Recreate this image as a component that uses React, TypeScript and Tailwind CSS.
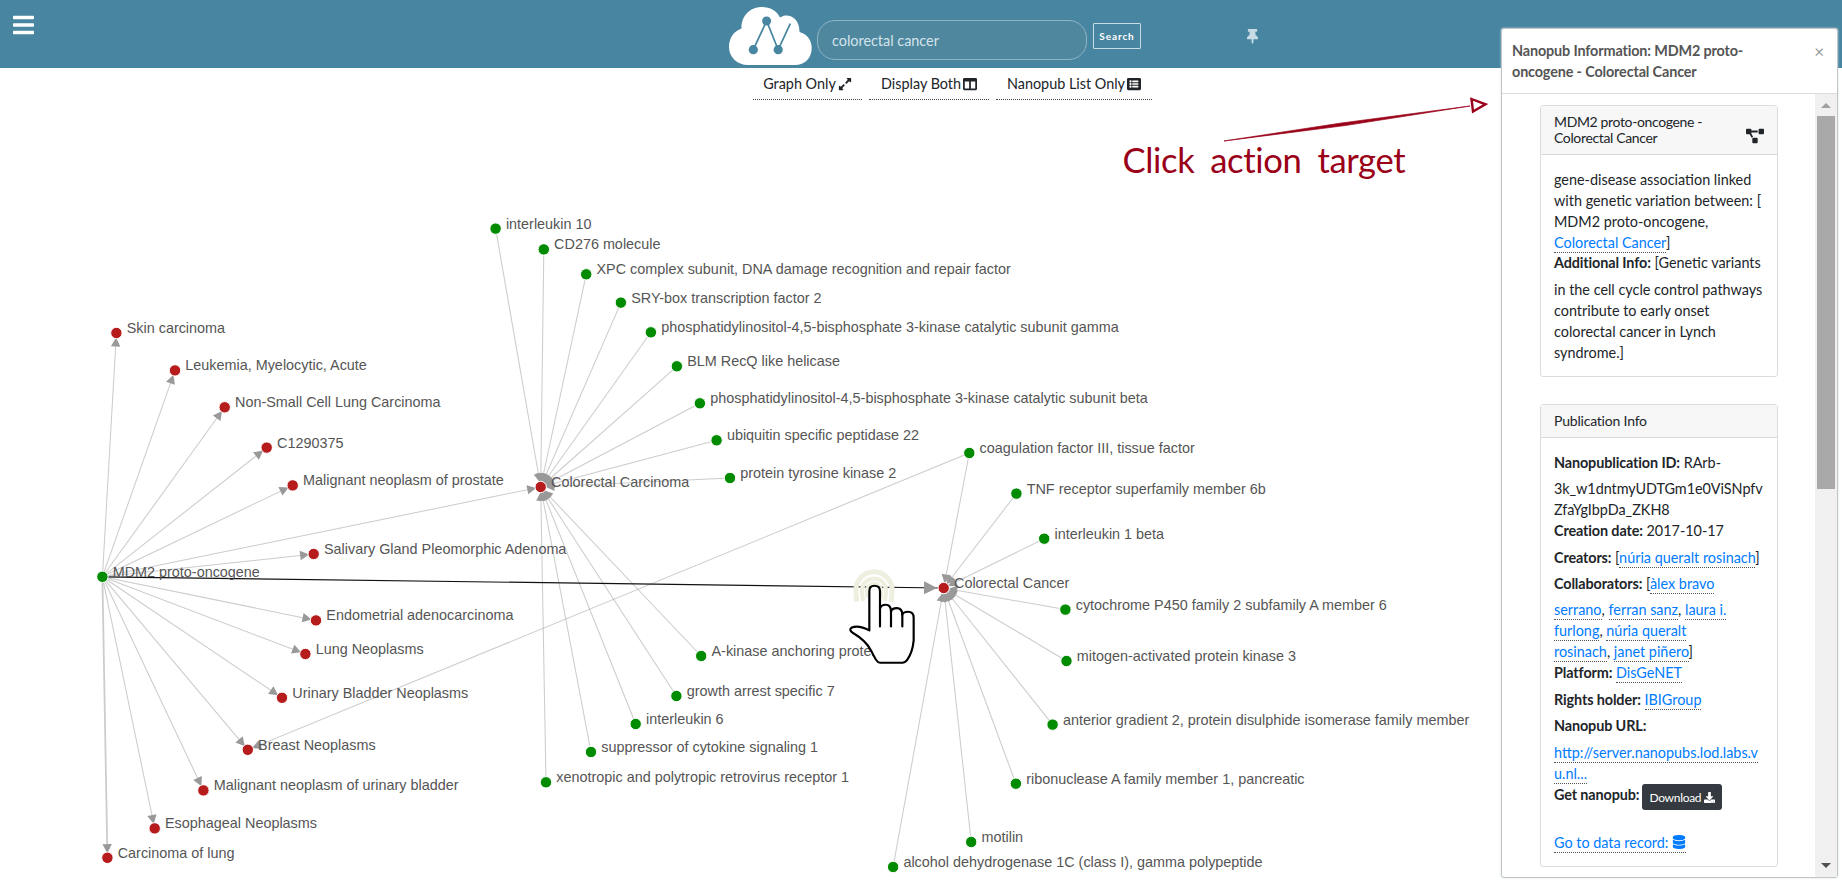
import React from "react";
import {
  FaBars,
  FaThumbtack,
  FaExpandAlt,
  FaColumns,
  FaListAlt,
  FaProjectDiagram,
  FaDownload,
  FaDatabase,
} from "react-icons/fa";

type Kind = "gene" | "disease";
type GraphNode = { id: string; x: number; y: number; kind: Kind; label: string };

const nodes: GraphNode[] = [
  { id: "mdm2", x: 102.4, y: 576.8, kind: "gene", label: "MDM2 proto-oncogene" },
  { id: "skin", x: 116.4, y: 333, kind: "disease", label: "Skin carcinoma" },
  { id: "leuk", x: 175, y: 370.4, kind: "disease", label: "Leukemia, Myelocytic, Acute" },
  { id: "nsclc", x: 224.7, y: 407.3, kind: "disease", label: "Non-Small Cell Lung Carcinoma" },
  { id: "c129", x: 266.7, y: 447.6, kind: "disease", label: "C1290375" },
  { id: "prost", x: 292.7, y: 485.4, kind: "disease", label: "Malignant neoplasm of prostate" },
  { id: "sgpa", x: 313.7, y: 554, kind: "disease", label: "Salivary Gland Pleomorphic Adenoma" },
  { id: "endo", x: 316, y: 620.4, kind: "disease", label: "Endometrial adenocarcinoma" },
  { id: "lung", x: 305.4, y: 654, kind: "disease", label: "Lung Neoplasms" },
  { id: "ubn", x: 282, y: 697.8, kind: "disease", label: "Urinary Bladder Neoplasms" },
  { id: "breast", x: 247.8, y: 749.8, kind: "disease", label: "Breast Neoplasms" },
  { id: "mub", x: 203.4, y: 790.4, kind: "disease", label: "Malignant neoplasm of urinary bladder" },
  { id: "eso", x: 154.7, y: 828.4, kind: "disease", label: "Esophageal Neoplasms" },
  { id: "colung", x: 107.4, y: 857.8, kind: "disease", label: "Carcinoma of lung" },
  { id: "crcar", x: 540.7, y: 487, kind: "disease", label: "Colorectal Carcinoma" },
  { id: "crcan", x: 943.7, y: 588, kind: "disease", label: "Colorectal Cancer" },
  { id: "il10", x: 495.6, y: 228.6, kind: "gene", label: "interleukin 10" },
  { id: "cd276", x: 543.8, y: 249.4, kind: "gene", label: "CD276 molecule" },
  { id: "xpc", x: 586.2, y: 274.3, kind: "gene", label: "XPC complex subunit, DNA damage recognition and repair factor" },
  { id: "sry", x: 620.9, y: 302.6, kind: "gene", label: "SRY-box transcription factor 2" },
  { id: "gamma", x: 650.9, y: 332.3, kind: "gene", label: "phosphatidylinositol-4,5-bisphosphate 3-kinase catalytic subunit gamma" },
  { id: "blm", x: 676.9, y: 366.3, kind: "gene", label: "BLM RecQ like helicase" },
  { id: "beta", x: 699.9, y: 403.3, kind: "gene", label: "phosphatidylinositol-4,5-bisphosphate 3-kinase catalytic subunit beta" },
  { id: "usp22", x: 716.6, y: 440.3, kind: "gene", label: "ubiquitin specific peptidase 22" },
  { id: "ptk2", x: 730, y: 478, kind: "gene", label: "protein tyrosine kinase 2" },
  { id: "akap", x: 701.2, y: 656, kind: "gene", label: "A-kinase anchoring protein" },
  { id: "gas7", x: 676.4, y: 696, kind: "gene", label: "growth arrest specific 7" },
  { id: "il6", x: 635.7, y: 724, kind: "gene", label: "interleukin 6" },
  { id: "socs1", x: 591, y: 752, kind: "gene", label: "suppressor of cytokine signaling 1" },
  { id: "xpr1", x: 546, y: 782.3, kind: "gene", label: "xenotropic and polytropic retrovirus receptor 1" },
  { id: "f3", x: 969.3, y: 453, kind: "gene", label: "coagulation factor III, tissue factor" },
  { id: "tnf", x: 1016.4, y: 493.6, kind: "gene", label: "TNF receptor superfamily member 6b" },
  { id: "il1b", x: 1044.2, y: 538.7, kind: "gene", label: "interleukin 1 beta" },
  { id: "cyp", x: 1065.4, y: 609.6, kind: "gene", label: "cytochrome P450 family 2 subfamily A member 6" },
  { id: "mapk3", x: 1066.5, y: 661, kind: "gene", label: "mitogen-activated protein kinase 3" },
  { id: "agr2", x: 1052.6, y: 724.6, kind: "gene", label: "anterior gradient 2, protein disulphide isomerase family member" },
  { id: "rnase", x: 1015.9, y: 783.7, kind: "gene", label: "ribonuclease A family member 1, pancreatic" },
  { id: "mln", x: 971.2, y: 842, kind: "gene", label: "motilin" },
  { id: "adh", x: 893.1, y: 867, kind: "gene", label: "alcohol dehydrogenase 1C (class I), gamma polypeptide" },
];

const byId: Record<string, GraphNode> = Object.fromEntries(nodes.map((n) => [n.id, n]));

const edges: [string, string][] = [
  ...["skin", "leuk", "nsclc", "c129", "prost", "crcar", "sgpa", "endo", "lung", "ubn", "breast", "mub", "eso", "colung"].map(
    (t): [string, string] => ["mdm2", t],
  ),
  ...["il10", "cd276", "xpc", "sry", "gamma", "blm", "beta", "usp22", "ptk2", "akap", "gas7", "il6", "socs1", "xpr1"].map(
    (s): [string, string] => [s, "crcar"],
  ),
  ...["f3", "tnf", "il1b", "cyp", "mapk3", "agr2", "rnase", "mln", "adh"].map((s): [string, string] => [s, "crcan"]),
  ["f3", "breast"],
];

function arrowHead(s: GraphNode, t: GraphNode, tip: number, length: number, half: number) {
  const d = Math.hypot(t.x - s.x, t.y - s.y);
  const ux = (t.x - s.x) / d;
  const uy = (t.y - s.y) / d;
  const bx = t.x - ux * (tip + length);
  const by = t.y - uy * (tip + length);
  return [
    [t.x - ux * tip, t.y - uy * tip],
    [bx - uy * half, by + ux * half],
    [bx + uy * half, by - ux * half],
  ]
    .map((p) => p.map((v) => v.toFixed(2)).join(","))
    .join(" ");
}

function Graph() {
  const a = byId.mdm2;
  const b = byId.crcan;
  return (
    <svg className="block overflow-visible" width={1842} height={786} viewBox="0 101 1842 786">
      <g stroke="#999" strokeOpacity={0.5}>
        {edges.map(([s, t]) => (
          <line key={s + t} x1={byId[s].x} y1={byId[s].y} x2={byId[t].x} y2={byId[t].y} strokeWidth={t === "colung" ? 1.8 : 1.05} />
        ))}
      </g>
      <line x1={a.x} y1={a.y} x2={b.x} y2={b.y} stroke="#111" strokeWidth={1.2} />
      <g fill="#999">
        {edges.map(([s, t]) => (
          <polygon key={s + t} points={arrowHead(byId[s], byId[t], 4.6, 9, 4.7)} />
        ))}
        <polygon points={arrowHead(a, b, 6.5, 13.2, 6.5)} />
      </g>
      {nodes.map((n) => (
        <circle key={n.id} cx={n.x} cy={n.y} r={5.7} fill={n.kind === "gene" ? "#008b00" : "#b71c1c"} stroke="#fff" strokeWidth={1} />
      ))}
      <g fill="#555" fontSize={14.4} fontFamily="'Liberation Sans', Arial, sans-serif">
        {nodes.map((n) => (
          <text key={n.id} x={n.x + 10.3} y={n.y}>
            {n.label}
          </text>
        ))}
      </g>
      <ClickCue />
      <g fill="#9a0018">
        <path d="M1224 141 L1340 123.2 L1470 106 L1345 125.6 Z" stroke="#9a0018" strokeWidth={0.7} />
        <path d="M1471.5 99 L1485.5 104.3 L1473 111.5 Z" fill="none" stroke="#9a0018" strokeWidth={2.4} />
        <text x={1122.5} y={173.3} fontSize={34.6} fontFamily="Lato, sans-serif" letterSpacing={-0.35} wordSpacing={7.4}>
          Click action target
        </text>
      </g>
    </svg>
  );
}

function ClickCue() {
  return (
    <g transform="translate(820 540.4) scale(0.33333)">
      <g fill="none" stroke="#eeefdf">
        <path d="M110 184 Q108 166 108 148 A54 54 0 0 1 216 148 Q216 166 214 184" strokeWidth={15} />
        <path d="M130 182 Q126 166 126 150 A36 36 0 0 1 198 150 Q198 166 194 182" strokeWidth={12} />
        <path d="M140 172 V150 A22 22 0 0 1 184 150 V172" strokeWidth={9} />
      </g>
      <path
        d="M148 270 V152 Q148 136 163 136 Q180 136 180 152 V205 Q183 193 197 193 Q213 193 213 213 Q216 203 230 203 Q247 203 247 223 Q250 214 264 214 Q281 214 281 232 V300 Q278 335 262 358 Q256 367 247 367 H180 Q174 367 168 358 Q160 345 153 330 C140 305 115 287 98 277 Q86 269 94 262 Q115 252 148 270 Z"
        fill="#fff"
        stroke="#000"
        strokeWidth={6.5}
        strokeLinejoin="round"
      />
      <path d="M180 200 V258 M213 210 V258 M247 220 V258" stroke="#000" strokeWidth={6.5} strokeLinecap="round" />
    </g>
  );
}

function Logo() {
  return (
    <svg width={84} height={60} viewBox="728 6 84 60">
      <path
        d="M748 65 C737 65 729 57 729 47 C729 38 734 31 741.5 28.5 C741 16 750 7 762 7 C770 7 777 11 780 17.5 C788 12 800 18 799.5 32 C807 34 811.7 40 811.7 48 C811.7 58 805 65 795 65 Z"
        fill="#fff"
      />
      <path d="M753.3 49.7 L766.6 21 L778.2 49.7 L790.3 23.7" fill="none" stroke="#4785a0" strokeWidth={1.7} />
      <g fill="#4785a0">
        <circle cx={766.6} cy={21} r={4.5} />
        <circle cx={753.3} cy={49.7} r={4.6} />
        <circle cx={778.2} cy={49.7} r={4.6} />
      </g>
    </svg>
  );
}

function A({ children }: { children: React.ReactNode }) {
  return <a className="border-b border-dotted border-[#555] pb-px text-[#007bff]">{children}</a>;
}

function Row({ h, children }: { h: string; children: React.ReactNode }) {
  return <div className={`${h} whitespace-nowrap leading-[21px]`}>{children}</div>;
}

function B({ children }: { children: React.ReactNode }) {
  return <b className="font-bold tracking-[-0.12px]">{children}</b>;
}

function Panel() {
  return (
    <aside className="absolute left-[1501px] top-[28px] flex h-[850px] w-[337px] flex-col rounded-[3px] border border-[#c4c4c4] bg-white text-[#212529] shadow-[0_0_2px_#c8dce5]">
      <div className="flex h-[65px] justify-between border-b border-[#dcdcdc] pl-[10px] pt-[11px]">
        <h2 className="w-[260px] text-[14.4px] font-bold leading-[21px] tracking-[-0.14px] text-[#555]">
          Nanopub Information: MDM2 proto-
          <br />
          oncogene - Colorectal Cancer
        </h2>
        <span className="mr-[13px] mt-[2px] text-[17px] leading-[20px] text-[#999]">×</span>
      </div>
      <div className="flex min-h-0 flex-1 justify-between">
        <div className="pl-[38px] pt-[11px] text-[14.4px]">
          <section className="h-[272px] w-[238px] rounded-[3px] border border-[#dcdcdc]">
            <div className="flex h-[49px] justify-between border-b border-[#d8d8d8] bg-[#f7f7f7] pl-[13px] pr-[13px] pt-[8px] text-[14px] leading-[16px] tracking-[-0.36px]">
              <span>
                MDM2 proto-oncogene -<br />
                Colorectal Cancer
              </span>
              <FaProjectDiagram className="mt-[13px] h-[18px] w-[18px]" />
            </div>
            <div className="pl-[13px] pt-[14px]">
              <Row h="h-[21px]">gene-disease association linked</Row>
              <Row h="h-[21px]">with genetic variation between: [</Row>
              <Row h="h-[21px]">MDM2 proto-oncogene,</Row>
              <Row h="h-[20px]">
                <A>Colorectal Cancer</A>]
              </Row>
              <Row h="h-[27px]">
                <B>Additional Info:</B> [Genetic variants
              </Row>
              <Row h="h-[21px]">in the cell cycle control pathways</Row>
              <Row h="h-[21px]">contribute to early onset</Row>
              <Row h="h-[21px]">colorectal cancer in Lynch</Row>
              <Row h="h-[21px]">syndrome.]</Row>
            </div>
          </section>
          <section className="mt-[27px] h-[463px] w-[238px] rounded-[3px] border border-[#dcdcdc]">
            <div className="h-[33px] border-b border-[#d8d8d8] bg-[#f7f7f7] pl-[13px] pt-[8px] text-[14px] leading-[16px] tracking-[-0.2px]">
              Publication Info
            </div>
            <div className="pl-[13px] pt-[14px]">
              <Row h="h-[26px]">
                <B>Nanopublication ID:</B> RArb-
              </Row>
              <Row h="h-[21px]">
                <span className="tracking-[-0.05px]">3k_w1dntmyUDTGm1e0ViSNpfv</span>
              </Row>
              <Row h="h-[21px]">ZfaYgIbpDa_ZKH8</Row>
              <Row h="h-[27px]">
                <B>Creation date:</B> 2017-10-17
              </Row>
              <Row h="h-[26px]">
                <B>Creators:</B> [<A>núria queralt rosinach</A>]
              </Row>
              <Row h="h-[26px]">
                <B>Collaborators:</B> [<A>àlex bravo</A>
              </Row>
              <Row h="h-[21px]">
                <A>serrano</A>, <A>ferran sanz</A>, <A>laura i.</A>
              </Row>
              <Row h="h-[21px]">
                <A>furlong</A>, <A>núria queralt</A>
              </Row>
              <Row h="h-[21px]">
                <A>rosinach</A>, <A>janet piñero</A>]
              </Row>
              <Row h="h-[27px]">
                <B>Platform:</B> <A>DisGeNET</A>
              </Row>
              <Row h="h-[26px]">
                <B>Rights holder:</B> <A>IBIGroup</A>
              </Row>
              <Row h="h-[27px]">
                <B>Nanopub URL:</B>
              </Row>
              <Row h="h-[21px]">
                <A>http://server.nanopubs.lod.labs.v</A>
              </Row>
              <Row h="h-[21px]">
                <A>u.nl...</A>
              </Row>
              <div className="flex h-[48px] whitespace-nowrap leading-[21px]">
                <B>Get nanopub:</B>
                <button className="ml-[3px] flex h-[26px] w-[80px] items-center justify-center gap-[3px] rounded-[3px] bg-[#343a40] text-[12px] tracking-[-0.3px] text-white">
                  Download
                  <FaDownload className="h-[11px] w-[11px]" />
                </button>
              </div>
              <Row h="h-[21px]">
                <A>
                  Go to data record: <FaDatabase className="inline h-[14px] w-[14px] align-[-1px]" />
                </A>
              </Row>
            </div>
          </section>
        </div>
        <div className="flex w-[22px] flex-col items-center bg-[#f0f0f0]">
          <svg width={22} height={22} viewBox="0 0 22 22">
            <path d="M6 14 L11 9 L16 14 Z" fill="#a0a0a0" />
          </svg>
          <div className="h-[373px] w-[18px] bg-[#a8a8a8]" />
          <svg className="mt-auto" width={22} height={22} viewBox="0 0 22 22">
            <path d="M6 8 L16 8 L11 13 Z" fill="#505050" />
          </svg>
        </div>
      </div>
    </aside>
  );
}

function ViewTab({ label, width, children }: { label: string; width: string; children: React.ReactNode }) {
  return (
    <div className={`${width} flex h-[32px] items-center justify-center gap-[2px] border-b border-dotted border-[#444] pt-[1px] text-[14.4px] text-[#212529]`}>
      {label}
      {children}
    </div>
  );
}

export default function App() {
  return (
    <div className="relative flex h-[887px] w-[1842px] flex-col overflow-hidden bg-white font-['Lato',sans-serif]">
      <header className="flex h-[68px] shrink-0 bg-[#4785a0]">
        <FaBars className="ml-[11px] mt-[13px] h-[24px] w-[25px] text-white" />
        <div className="ml-[692px] mt-[6px]">
          <Logo />
        </div>
        <div className="ml-[5px] mt-[20px] flex h-[40px] w-[270px] items-center rounded-[18px] border border-[#8fb4c4] bg-[#4f879f] pl-[14px] pt-[2px] text-[14.4px] text-[#d3e3ea]">
          colorectal cancer
        </div>
        <button className="ml-[6px] mt-[23px] flex h-[26px] w-[48px] items-center justify-center rounded-[1px] border border-[#c8dce5] text-[10px] font-bold tracking-[0.9px] text-white">
          Search
        </button>
        <FaThumbtack className="ml-[104px] mt-[29px] h-[15px] w-[15px] text-[#c8dce5]" />
      </header>
      <nav className="flex h-[33px] shrink-0 gap-[7px] pl-[753px]">
        <ViewTab label="Graph Only" width="w-[109px]">
          <FaExpandAlt className="h-[14px] w-[14px]" />
        </ViewTab>
        <ViewTab label="Display Both" width="w-[120px]">
          <FaColumns className="h-[14px] w-[14px]" />
        </ViewTab>
        <ViewTab label="Nanopub List Only" width="w-[156px]">
          <FaListAlt className="h-[14px] w-[14px]" />
        </ViewTab>
      </nav>
      <Graph />
      <Panel />
    </div>
  );
}
